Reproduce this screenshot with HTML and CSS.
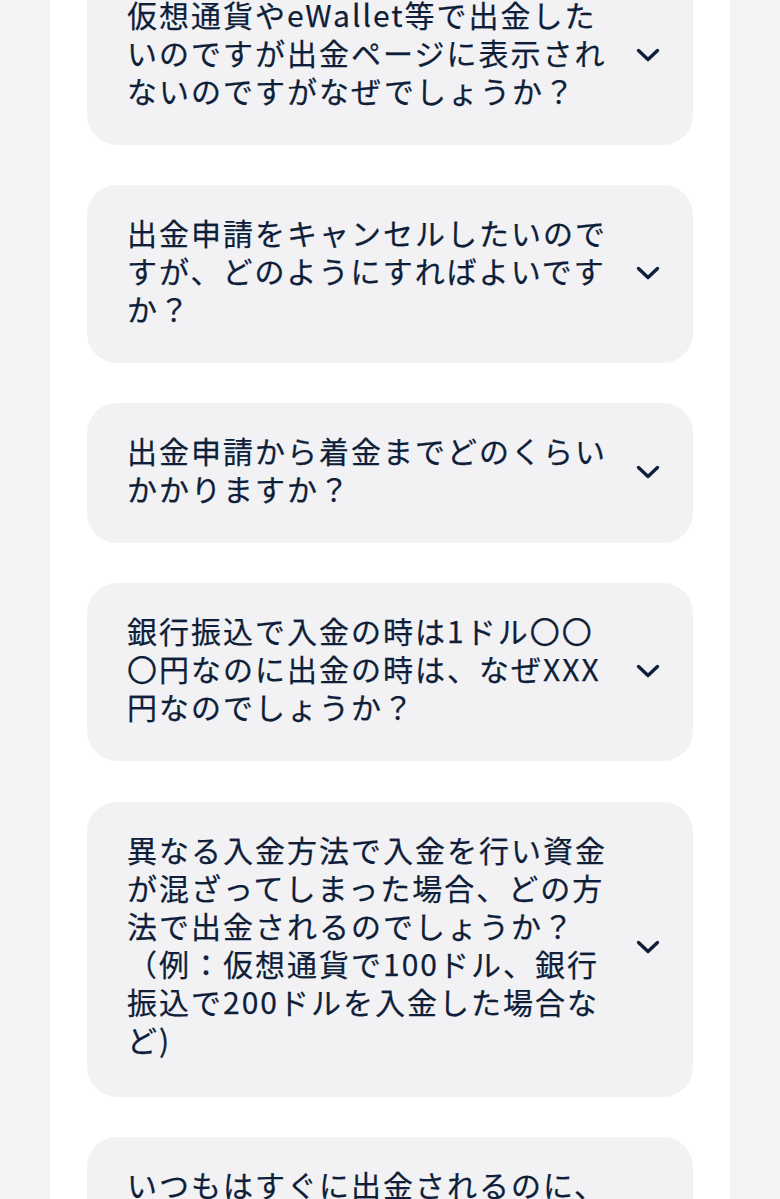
FILE: index.html
```html
<!DOCTYPE html>
<html lang="ja">
<head>
<meta charset="utf-8">
<title>FAQ</title>
<link rel="stylesheet" href="styles.css">
</head>
<body>
<main class="column">
  <ul class="faq">
    <li class="item">
      <span class="q">仮想通貨やeWallet等で出金したいのですが出金ページに表示されないのですがなぜでしょうか？</span>
      <svg class="chev" viewBox="0 0 24 14" aria-hidden="true"><polyline points="2.5,2.5 12,11.5 21.5,2.5"/></svg>
    </li>
    <li class="item">
      <span class="q">出金申請をキャンセルしたいのですが、どのようにすればよいですか？</span>
      <svg class="chev" viewBox="0 0 24 14" aria-hidden="true"><polyline points="2.5,2.5 12,11.5 21.5,2.5"/></svg>
    </li>
    <li class="item">
      <span class="q">出金申請から着金までどのくらいかかりますか？</span>
      <svg class="chev" viewBox="0 0 24 14" aria-hidden="true"><polyline points="2.5,2.5 12,11.5 21.5,2.5"/></svg>
    </li>
    <li class="item">
      <span class="q">銀行振込で入金の時は1ドル〇〇〇円なのに出金の時は、なぜXXX円なのでしょうか？</span>
      <svg class="chev" viewBox="0 0 24 14" aria-hidden="true"><polyline points="2.5,2.5 12,11.5 21.5,2.5"/></svg>
    </li>
    <li class="item item-tall">
      <span class="q">異なる入金方法で入金を行い資金が混ざってしまった場合、どの方法で出金されるのでしょうか？（例：仮想通貨で100ドル、銀行振込で200ドルを入金した場合など)</span>
      <svg class="chev" viewBox="0 0 24 14" aria-hidden="true"><polyline points="2.5,2.5 12,11.5 21.5,2.5"/></svg>
    </li>
    <li class="item">
      <span class="q">いつもはすぐに出金されるのに、今回はなぜ時間がかかっているのでしょうか？</span>
      <svg class="chev" viewBox="0 0 24 14" aria-hidden="true"><polyline points="2.5,2.5 12,11.5 21.5,2.5"/></svg>
    </li>
  </ul>
</main>
</body>
</html>
```

FILE: styles.css
```css
html, body {
  margin: 0;
  padding: 0;
  background: #f3f3f6;
}
body {
  font-family: "Noto Sans CJK JP", "Noto Sans", sans-serif;
  color: #0f1f3a;
  height: 1199px;
  overflow: hidden;
}
.column {
  width: 680px;
  margin-left: 50px;
  background: #ffffff;
  min-height: 1240px;
}
.faq {
  list-style: none;
  margin: -33px 0 0;
  padding: 0 37px;
  display: flex;
  flex-direction: column;
  gap: 40px;
}
.item {
  background: #f2f2f5;
  border-radius: 30px;
  padding: 28px 33px 36px 40px;
  display: flex;
  align-items: center;
  gap: 20px;
}
.item-tall {
  margin-top: 1px;
  padding-bottom: 39px;
}
.q {
  flex: 1;
  font-size: 30px;
  font-weight: 400;
  line-height: 38px;
  letter-spacing: 2px;
  line-break: strict;
  -webkit-text-stroke: 0.25px #0f1f3a;
}
.chev {
  flex: 0 0 24px;
  width: 24px;
  height: 14px;
  margin-top: 6px;
  fill: none;
  stroke: #0f1f3a;
  stroke-width: 3.4;
  stroke-linecap: round;
  stroke-linejoin: round;
}
```
